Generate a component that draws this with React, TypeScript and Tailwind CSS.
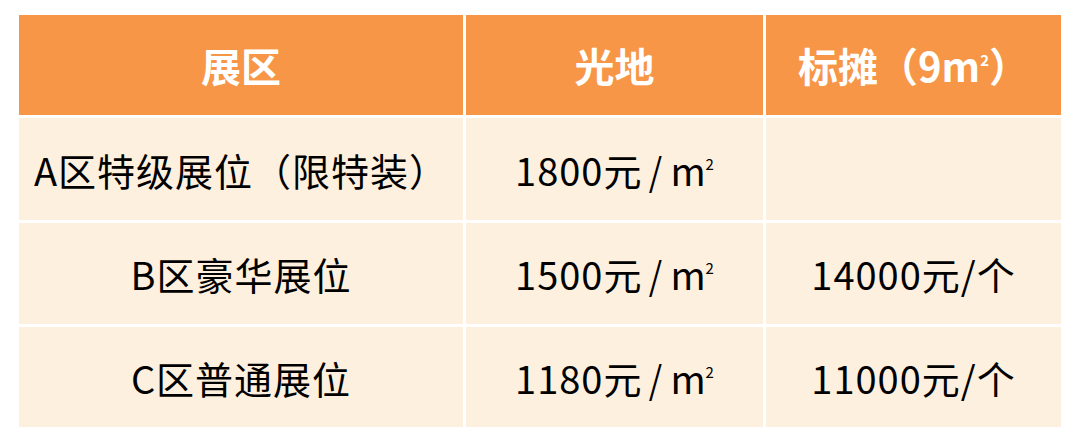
import { Fragment } from "react";

function Sq() {
  return (
    <>
      <span className="tracking-normal">m</span>
      <span className="text-[15px] align-[1.1em] leading-none tracking-normal">2</span>
    </>
  );
}

function Price({ value, unit }: { value: string; unit: "sq" | "ge" }) {
  return (
    <span>
      {value}元
      {unit === "sq" ? (
        <>
          <span className="inline-block mx-[6px] scale-x-90">/</span>
          <Sq />
        </>
      ) : (
        <>/个</>
      )}
    </span>
  );
}

const rowHeights = ["h-[102px]", "h-[101px]", "h-[100px]"];

const rows = [
  { zone: "A区特级展位（限特装）", bare: "1800", booth: "" },
  { zone: "B区豪华展位", bare: "1500", booth: "14000" },
  { zone: "C区普通展位", bare: "1180", booth: "11000" },
];

export default function App() {
  const head =
    "h-[100px] bg-[#F79646] flex items-center justify-center text-white text-[40px] font-bold";
  const cell =
    "bg-[#FEF0DF] flex items-center justify-center text-black text-[38px] tracking-[1px] whitespace-nowrap";

  return (
    <div
      className="w-[1080px] h-[443px] bg-white pt-[15px] pl-[19px]"
      style={{ fontFamily: '"Noto Sans CJK SC", "Noto Sans", sans-serif' }}
    >
      <div className="grid grid-cols-[444px_297px_295px] gap-[3px] w-[1042px]">
        <div className={head}>展区</div>
        <div className={head}>光地</div>
        <div className={head}>
          <span>
            标摊（9<Sq />）
          </span>
        </div>
        {rows.map((r, i) => (
          <Fragment key={i}>
            <div className={`${rowHeights[i]} ${cell}`}>{r.zone}</div>
            <div className={`${rowHeights[i]} ${cell}`}>
              <Price value={r.bare} unit="sq" />
            </div>
            <div className={`${rowHeights[i]} ${cell}`}>
              {r.booth && <Price value={r.booth} unit="ge" />}
            </div>
          </Fragment>
        ))}
      </div>
    </div>
  );
}
